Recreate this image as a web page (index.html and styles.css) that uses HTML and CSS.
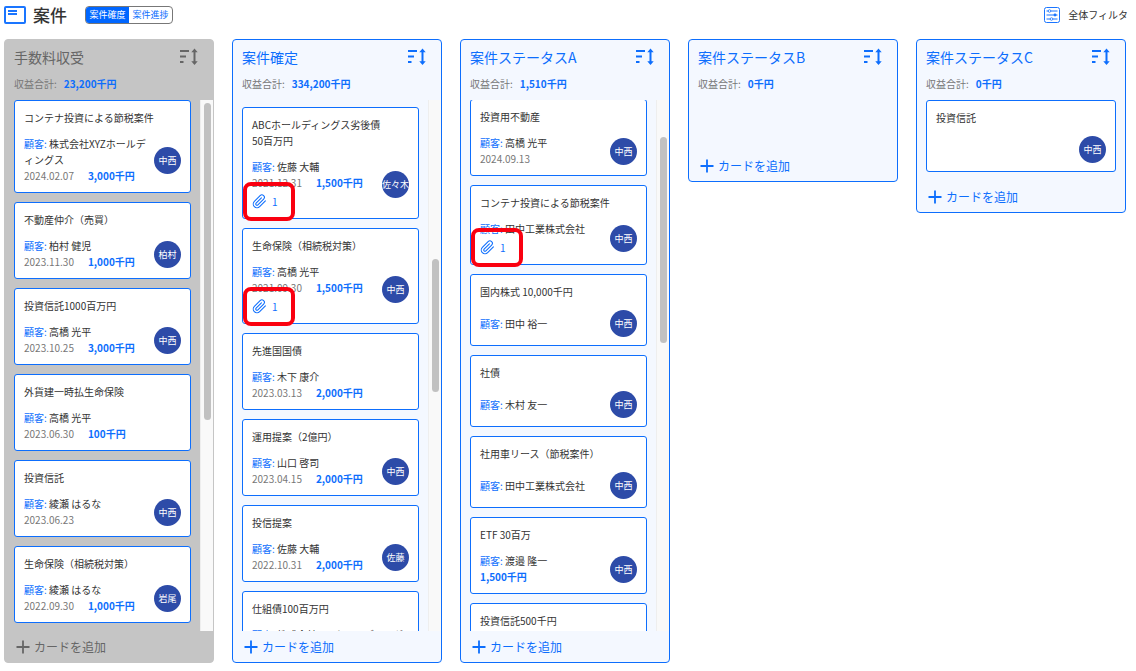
FILE: index.html
```html
<!DOCTYPE html>
<html lang="ja">
<head>
<meta charset="utf-8">
<title>案件</title>
<meta name="viewport" content="width=device-width, initial-scale=1">
<link rel="stylesheet" href="styles.css">
</head>
<body>
<svg class="defs" aria-hidden="true">
  <symbol id="sort" viewBox="0 0 18 18"><path d="M0 3h9M0 8.500h6M0 14h3.500" fill="none" stroke="currentColor" stroke-width="2"/><path d="M14.500 3v12" fill="none" stroke="currentColor" stroke-width="2"/><path d="M14.500 .5l3.200 3.700h-6.400zM14.500 17l3.200-3.700h-6.400z" fill="currentColor"/></symbol>
  <symbol id="plus" viewBox="0 0 14 14"><path d="M7 .5v13M.5 7h13" fill="none" stroke="currentColor" stroke-width="1.800"/></symbol>
  <symbol id="clip" viewBox="0 0 24 24"><path d="M21.440 11.050l-9.190 9.190a6 6 0 0 1-8.490-8.490l9.190-9.190a4 4 0 0 1 5.660 5.660l-9.200 9.190a2 2 0 0 1-2.830-2.830l8.490-8.480" fill="none" stroke="currentColor" stroke-width="1.700" stroke-linecap="round" stroke-linejoin="round"/></symbol>
</svg>
<header class="topbar">
  <svg class="logo" viewBox="0 0 22 18" aria-hidden="true"><rect x="1" y="1" width="20" height="16" rx="1" fill="none" stroke="#1a75ff" stroke-width="2"/><path d="M4 5h9M4 8h9" stroke="#1a75ff" stroke-width="2"/></svg>
  <h1 class="page-title">案件</h1>
  <div class="toggle"><button class="toggle-item toggle-on" type="button">案件確度</button><button class="toggle-item" type="button">案件進捗</button></div>
  <button class="filter" type="button"><svg class="filter-icon" viewBox="0 0 16 16" aria-hidden="true"><rect x=".5" y=".5" width="15" height="15" rx="2" fill="none" stroke="#1a75ff"/><path d="M2.500 4h11M2.500 8h11M2.500 12h11" stroke="#1a75ff"/><circle cx="5.500" cy="4" r="1.300" fill="#fff" stroke="#1a75ff" stroke-width=".8"/><circle cx="11" cy="8" r="1.400" fill="#1a75ff"/><circle cx="7.500" cy="12" r="1.300" fill="#fff" stroke="#1a75ff" stroke-width=".8"/></svg>全体フィルタ</button>
</header>
<main class="board">
  <section class="column column-closed">
    <header class="column-head"><div class="column-title"><h2>手数料収受</h2><button class="sort" type="button" aria-label="並べ替え"><svg><use href="#sort"/></svg></button></div><p class="total">収益合計:<b>23,200千円</b></p></header>
    <div class="list">
      <div class="cards">
        <article class="card"><h3>コンテナ投資による節税案件</h3><div class="card-body"><div class="info"><p class="client"><span>顧客:</span> 株式会社XYZホールディングス</p><p class="meta"><time>2024.02.07</time><b>3,000千円</b></p></div><span class="avatar">中西</span></div></article>
        <article class="card"><h3>不動産仲介（売買）</h3><div class="card-body"><div class="info"><p class="client"><span>顧客:</span> 柏村 健児</p><p class="meta"><time>2023.11.30</time><b>1,000千円</b></p></div><span class="avatar">柏村</span></div></article>
        <article class="card"><h3>投資信託1000百万円</h3><div class="card-body"><div class="info"><p class="client"><span>顧客:</span> 高橋 光平</p><p class="meta"><time>2023.10.25</time><b>3,000千円</b></p></div><span class="avatar">中西</span></div></article>
        <article class="card"><h3>外貨建一時払生命保険</h3><div class="card-body"><div class="info"><p class="client"><span>顧客:</span> 高橋 光平</p><p class="meta"><time>2023.06.30</time><b>100千円</b></p></div></div></article>
        <article class="card"><h3>投資信託</h3><div class="card-body"><div class="info"><p class="client"><span>顧客:</span> 綾瀬 はるな</p><p class="meta"><time>2023.06.23</time></p></div><span class="avatar">中西</span></div></article>
        <article class="card"><h3>生命保険（相続税対策）</h3><div class="card-body"><div class="info"><p class="client"><span>顧客:</span> 綾瀬 はるな</p><p class="meta"><time>2022.09.30</time><b>1,000千円</b></p></div><span class="avatar">岩尾</span></div></article>
      </div>
      <div class="track"><div class="thumb" style="top:0.6%;height:59.6%"></div></div>
    </div>
    <button class="add" type="button"><svg><use href="#plus"/></svg>カードを追加</button>
  </section>

  <section class="column">
    <header class="column-head"><div class="column-title"><h2>案件確定</h2><button class="sort" type="button" aria-label="並べ替え"><svg><use href="#sort"/></svg></button></div><p class="total">収益合計:<b>334,200千円</b></p></header>
    <div class="list">
      <div class="cards cards-spaced">
        <article class="card"><h3>ABCホールディングス劣後債<br>50百万円</h3><div class="card-body"><div class="info"><p class="client"><span>顧客:</span> 佐藤 大輔</p><p class="meta"><time>2021.12.31</time><b>1,500千円</b></p><p class="attach"><svg><use href="#clip"/></svg>1<span class="mark"></span></p></div><span class="avatar">佐々木</span></div></article>
        <article class="card"><h3>生命保険（相続税対策）</h3><div class="card-body"><div class="info"><p class="client"><span>顧客:</span> 高橋 光平</p><p class="meta"><time>2021.09.30</time><b>1,500千円</b></p><p class="attach"><svg><use href="#clip"/></svg>1<span class="mark"></span></p></div><span class="avatar">中西</span></div></article>
        <article class="card"><h3>先進国国債</h3><div class="card-body"><div class="info"><p class="client"><span>顧客:</span> 木下 康介</p><p class="meta"><time>2023.03.13</time><b>2,000千円</b></p></div></div></article>
        <article class="card"><h3>運用提案（2億円）</h3><div class="card-body"><div class="info"><p class="client"><span>顧客:</span> 山口 啓司</p><p class="meta"><time>2023.04.15</time><b>2,000千円</b></p></div><span class="avatar">中西</span></div></article>
        <article class="card"><h3>投信提案</h3><div class="card-body"><div class="info"><p class="client"><span>顧客:</span> 佐藤 大輔</p><p class="meta"><time>2022.10.31</time><b>2,000千円</b></p></div><span class="avatar">佐藤</span></div></article>
        <article class="card"><h3>仕組債100百万円</h3><div class="card-body"><div class="info"><p class="client"><span>顧客:</span> 株式会社XYZホールディングス</p></div></div></article>
      </div>
      <div class="track"><div class="thumb" style="top:30%;height:25%"></div></div>
    </div>
    <button class="add" type="button"><svg><use href="#plus"/></svg>カードを追加</button>
  </section>

  <section class="column">
    <header class="column-head"><div class="column-title"><h2>案件ステータスA</h2><button class="sort" type="button" aria-label="並べ替え"><svg><use href="#sort"/></svg></button></div><p class="total">収益合計:<b>1,510千円</b></p></header>
    <div class="list">
      <div class="cards cards-scrolled">
        <article class="card"><h3>投資用不動産</h3><div class="card-body"><div class="info"><p class="client"><span>顧客:</span> 高橋 光平</p><p class="meta"><time>2024.09.13</time></p></div><span class="avatar">中西</span></div></article>
        <article class="card"><h3>コンテナ投資による節税案件</h3><div class="card-body"><div class="info"><p class="client"><span>顧客:</span> 田中工業株式会社</p><p class="attach"><svg><use href="#clip"/></svg>1<span class="mark"></span></p></div><span class="avatar">中西</span></div></article>
        <article class="card"><h3>国内株式 10,000千円</h3><div class="card-body"><div class="info"><p class="client"><span>顧客:</span> 田中 裕一</p></div><span class="avatar">中西</span></div></article>
        <article class="card"><h3>社債</h3><div class="card-body"><div class="info"><p class="client"><span>顧客:</span> 木村 友一</p></div><span class="avatar">中西</span></div></article>
        <article class="card"><h3>社用車リース（節税案件）</h3><div class="card-body"><div class="info"><p class="client"><span>顧客:</span> 田中工業株式会社</p></div><span class="avatar">中西</span></div></article>
        <article class="card"><h3>ETF 30百万</h3><div class="card-body"><div class="info"><p class="client"><span>顧客:</span> 渡邉 隆一</p><p class="meta"><b>1,500千円</b></p></div><span class="avatar">中西</span></div></article>
        <article class="card"><h3>投資信託500千円</h3><div class="card-body"></div></article>
      </div>
      <div class="track"><div class="thumb" style="top:7%;height:38.8%"></div></div>
    </div>
    <button class="add" type="button"><svg><use href="#plus"/></svg>カードを追加</button>
  </section>

  <section class="column">
    <header class="column-head"><div class="column-title"><h2>案件ステータスB</h2><button class="sort" type="button" aria-label="並べ替え"><svg><use href="#sort"/></svg></button></div><p class="total">収益合計:<b>0千円</b></p></header>
    <div class="list"><div class="cards"></div></div>
    <button class="add" type="button"><svg><use href="#plus"/></svg>カードを追加</button>
  </section>

  <section class="column">
    <header class="column-head"><div class="column-title"><h2>案件ステータスC</h2><button class="sort" type="button" aria-label="並べ替え"><svg><use href="#sort"/></svg></button></div><p class="total">収益合計:<b>0千円</b></p></header>
    <div class="list">
      <div class="cards">
        <article class="card"><h3>投資信託</h3><div class="card-body"><span class="avatar">中西</span></div></article>
      </div>
    </div>
    <button class="add" type="button"><svg><use href="#plus"/></svg>カードを追加</button>
  </section>
</main>
</body>
</html>
```
FILE: styles.css
```css
:root {
  --blue: #0d6efd;
  --ink: #333;
  --muted: #777;
}

* {
  box-sizing: border-box;
}

body,
h1,
h2,
h3,
p {
  margin: 0;
  font-weight: 400;
}

body {
  display: flex;
  flex-direction: column;
  height: 100vh;
  overflow: hidden;
  background: #fff;
  color: var(--ink);
  font: 10px/16px "Noto Sans CJK JP", sans-serif;
}

button {
  padding: 0;
  border: 0;
  background: none;
  color: inherit;
  font: inherit;
  cursor: pointer;
}

.defs {
  display: none;
}

.topbar {
  display: flex;
  align-items: center;
  height: 30px;
  margin-bottom: 9px;
  padding: 0 8px 0 4px;
}

.logo {
  width: 22px;
  height: 18px;
}

.page-title {
  margin: 0 18px 0 7px;
  font-size: 17px;
  line-height: 24px;
  font-weight: 500;
}

.toggle {
  display: flex;
  overflow: hidden;
  border: 1px solid #777;
  border-radius: 4px;
}

.toggle-item {
  width: 43px;
  color: var(--blue);
  font-size: 9px;
  line-height: 16px;
}

.toggle-on {
  background: #0066ff;
  color: #fff;
}

.filter {
  display: flex;
  align-items: center;
  gap: 8px;
  margin-left: auto;
}

.filter-icon {
  width: 16px;
  height: 16px;
}

.board {
  display: grid;
  flex: 1;
  grid-template-columns: repeat(5, minmax(0, 1fr));
  grid-template-rows: minmax(0, 1fr);
  gap: 18px;
  align-items: start;
  min-height: 0;
  padding: 0 10px 8px 4px;
}

.column {
  display: flex;
  flex-direction: column;
  max-height: 100%;
  border: 1px solid var(--blue);
  border-radius: 4px;
  background: #f4f8ff;
  color: var(--blue);
}

.column-closed {
  border-color: #c5c5c5;
  background: #c5c5c5;
  color: #666;
}

.column-head {
  display: grid;
  gap: 9px;
  padding: 7px 15px 8px 9px;
}

.column-title {
  display: flex;
  align-items: center;
  justify-content: space-between;
}

.column-title h2 {
  font-size: 14px;
  line-height: 20px;
}

.sort,
.sort svg {
  display: block;
  width: 18px;
  height: 18px;
}

.total {
  color: var(--muted);
}

.total b {
  margin-left: 7px;
}

b {
  color: var(--blue);
  font-weight: 700;
}

.list {
  display: flex;
  min-height: 0;
  overflow: hidden;
}

.cards {
  display: flex;
  flex: 1;
  flex-direction: column;
  gap: 9px;
  min-width: 0;
  min-height: 50px;
  padding: 0 9px 9px;
}

.cards-spaced {
  padding-top: 7px;
}

.cards-scrolled {
  margin-top: -1px;
}

.card {
  flex: none;
  padding: 9px 9px 8px;
  border: 1px solid var(--blue);
  border-radius: 3px;
  background: #fff;
  color: var(--ink);
}

.card h3 {
  margin-bottom: 10px;
  font-size: 10px;
  line-height: 16px;
}

.card-body {
  display: flex;
  align-items: center;
  gap: 3px;
  min-height: 27px;
}

.info {
  flex: 1;
  min-width: 0;
}

.client {
  word-break: break-all;
}

.client span {
  color: var(--blue);
}

.meta {
  display: flex;
  gap: 14px;
  color: var(--muted);
}

.avatar {
  flex: none;
  width: 27px;
  height: 27px;
  margin-left: auto;
  border-radius: 50%;
  background: #2d4ba8;
  color: #fff;
  font-size: 9px;
  line-height: 27px;
  text-align: center;
  white-space: nowrap;
}

.attach {
  position: relative;
  display: flex;
  align-items: center;
  gap: 5px;
  height: 19px;
  padding-top: 2px;
  color: var(--blue);
}

.attach svg {
  width: 15px;
  height: 15px;
}

.mark {
  position: absolute;
  top: -9px;
  left: -9px;
  width: 52px;
  height: 39px;
  border: 4px solid #fa0010;
  border-radius: 8px;
}

.track {
  position: relative;
  flex: none;
  width: 13px;
  border-left: 1px solid #eee;
  background: #f9f9f9;
}

.thumb {
  position: absolute;
  left: 3px;
  width: 7px;
  border-radius: 4px;
  background: #c1c1c1;
}

.add {
  display: flex;
  flex: none;
  align-items: center;
  gap: 4px;
  height: 31px;
  padding-left: 11px;
  font-size: 12px;
}

.add svg {
  width: 14px;
  height: 14px;
}
```
